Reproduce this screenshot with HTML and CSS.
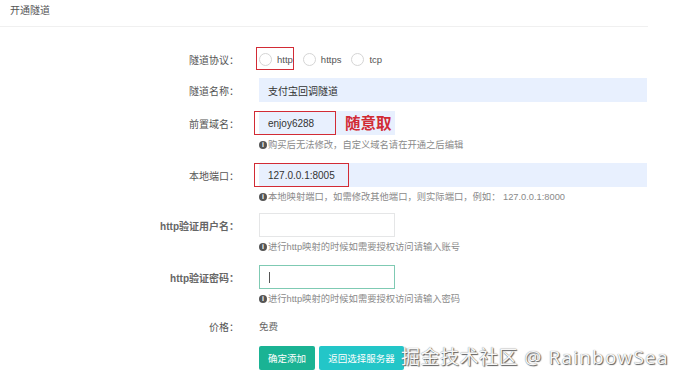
FILE: index.html
```html
<!DOCTYPE html>
<html lang="zh">
<head>
<meta charset="utf-8">
<title>开通隧道</title>
<link rel="stylesheet" href="styles.css">
</head>
<body>
<div class="panel">
  <div class="panel-head">开通隧道</div>
  <form class="form">
    <div class="group g1">
      <div class="row">
        <label class="lbl">隧道协议：</label>
        <div class="ctrl radios">
          <span class="radio-item mark-wrap"><span class="radio"></span>http<span class="mark mark-http"></span></span>
          <span class="radio-item"><span class="radio"></span>https</span>
          <span class="radio-item"><span class="radio"></span>tcp</span>
        </div>
      </div>
    </div>
    <div class="group g2">
      <div class="row">
        <label class="lbl">隧道名称：</label>
        <div class="ctrl"><div class="input filled wide">支付宝回调隧道</div></div>
      </div>
    </div>
    <div class="group g3">
      <div class="row">
        <label class="lbl">前置域名：</label>
        <div class="ctrl">
          <div class="input filled narrow mark-wrap">enjoy6288<span class="mark mark-domain"></span><span class="note">随意取</span></div>
        </div>
      </div>
      <div class="help"><span class="info">i</span>购买后无法修改，自定义域名请在开通之后编辑</div>
    </div>
    <div class="group g4">
      <div class="row">
        <label class="lbl">本地端口：</label>
        <div class="ctrl"><div class="input filled wide mark-wrap">127.0.0.1:8005<span class="mark mark-port"></span></div></div>
      </div>
      <div class="help"><span class="info">i</span>本地映射端口，如需修改其他端口，则实际端口，例如： 127.0.0.1:8000</div>
    </div>
    <div class="group g5">
      <div class="row">
        <label class="lbl bold">http验证用户名：</label>
        <div class="ctrl"><div class="input plain narrow"></div></div>
      </div>
      <div class="help"><span class="info">i</span>进行http映射的时候如需要授权访问请输入账号</div>
    </div>
    <div class="group g6">
      <div class="row">
        <label class="lbl bold">http验证密码：</label>
        <div class="ctrl"><div class="input plain narrow focus"><span class="caret"></span></div></div>
      </div>
      <div class="help"><span class="info">i</span>进行http映射的时候如需要授权访问请输入密码</div>
    </div>
    <div class="group g7">
      <div class="row">
        <label class="lbl">价格：</label>
        <div class="ctrl price">免费</div>
      </div>
    </div>
    <div class="actions">
      <button type="button" class="btn btn-primary">确定添加</button>
      <button type="button" class="btn btn-info">返回选择服务器</button>
    </div>
  </form>
</div>
<div class="watermark">掘金技术社区<span class="wm-latin"> @ RainbowSea</span></div>
</body>
</html>
```
FILE: styles.css
```css
* { box-sizing: border-box; }
html, body { margin: 0; padding: 0; background: #fff; }
body {
  width: 674px;
  height: 382px;
  overflow: hidden;
  position: relative;
  font-family: "Liberation Sans", "Noto Sans CJK SC", sans-serif;
  color: #555;
  font-size: 10px;
}
.panel { width: 648px; }
.panel-head {
  height: 27px;
  padding: 4px 0 0 10px;
  font-size: 10px;
  color: #555;
  border-bottom: 1px solid #f0f0f0;
  line-height: 14px;
}
.form { padding-top: 20px; }
.group { margin-bottom: 8px; }
.g1 { margin-bottom: 7px; }
.g2 { margin-bottom: 9px; }
.g3 { margin-bottom: 12px; }
.g4 { margin-bottom: 10px; }
.g5 { margin-bottom: 12px; }
.g6 { margin-bottom: 9px; }
.g7 { margin-bottom: 8px; }
.row { display: flex; align-items: center; height: 24px; }
.lbl {
  width: 239px;
  flex: none;
  text-align: right;
  color: #555;
  font-size: 10px;
}
.lbl.bold { font-weight: bold; color: #666; }
.ctrl { margin-left: 20px; flex: 1; display: flex; align-items: center; height: 24px; }
.radio-item { display: inline-flex; align-items: center; font-size: 9.5px; color: #555; margin-right: 10px; height: 20px; }
.radio {
  width: 13px; height: 13px;
  border: 1px solid #d5d5d5;
  border-radius: 50%;
  margin-right: 5px;
  background: #fff;
}
.mark-wrap { position: relative; }
.mark { position: absolute; border: 1.5px solid #d22b35; pointer-events: none; }
.mark-http { left: -3px; top: -2px; width: 38px; height: 23px; }
.mark-domain { left: -5px; top: 0; width: 82px; height: 24px; }
.mark-port { left: -5px; top: 0; width: 95px; height: 24px; }
.input {
  height: 24px;
  display: flex;
  align-items: center;
  padding-left: 9px;
  font-size: 10px;
  color: #333;
}
.filled { background: #e8f0fe; }
.wide { width: 388px; }
.narrow { width: 136px; }
.plain { border: 1px solid #e5e6e7; background: #fff; }
.focus { border-color: #7fcab3; }
.caret { width: 1px; height: 11px; background: #555; }
.note {
  position: absolute;
  left: 86px;
  top: 1px;
  color: #d22b35;
  font-weight: bold;
  font-size: 15.5px;
  font-family: "Noto Sans CJK SC", sans-serif;
  line-height: 20px;
}
.help {
  margin: 4px 0 0 259px;
  font-size: 9.3px;
  color: #8a8a8a;
  line-height: 12px;
  display: flex;
  align-items: center;
}
.info {
  display: inline-flex;
  width: 8px; height: 8px;
  border-radius: 50%;
  background: #555;
  color: #fff;
  font-size: 7px;
  font-weight: bold;
  align-items: center;
  justify-content: center;
  margin-right: 1px;
  line-height: 8px;
}
.price { color: #666; font-size: 9.5px; }
.actions { margin-left: 259px; display: flex; gap: 4px; }
.btn {
  height: 24px;
  border: none;
  border-radius: 2px;
  color: #fff;
  font-family: inherit;
  font-size: 9.5px;
  padding: 0;
}
.btn-primary { background: #1ab394; width: 56px; }
.btn-info { background: #23c6c8; width: 85px; }
.watermark {
  position: absolute;
  left: 401px;
  top: 343px;
  font-family: "Noto Sans CJK SC", sans-serif;
  font-size: 19px;
  line-height: 26px;
  color: #f7f7f7;
  text-shadow: 1px 1px 1px #5a5a5a, 0 0 1px #777;
  white-space: nowrap;
  letter-spacing: 0.5px;
}
.wm-latin { font-family: "Open Sans", sans-serif; letter-spacing: 1.2px; }
```
